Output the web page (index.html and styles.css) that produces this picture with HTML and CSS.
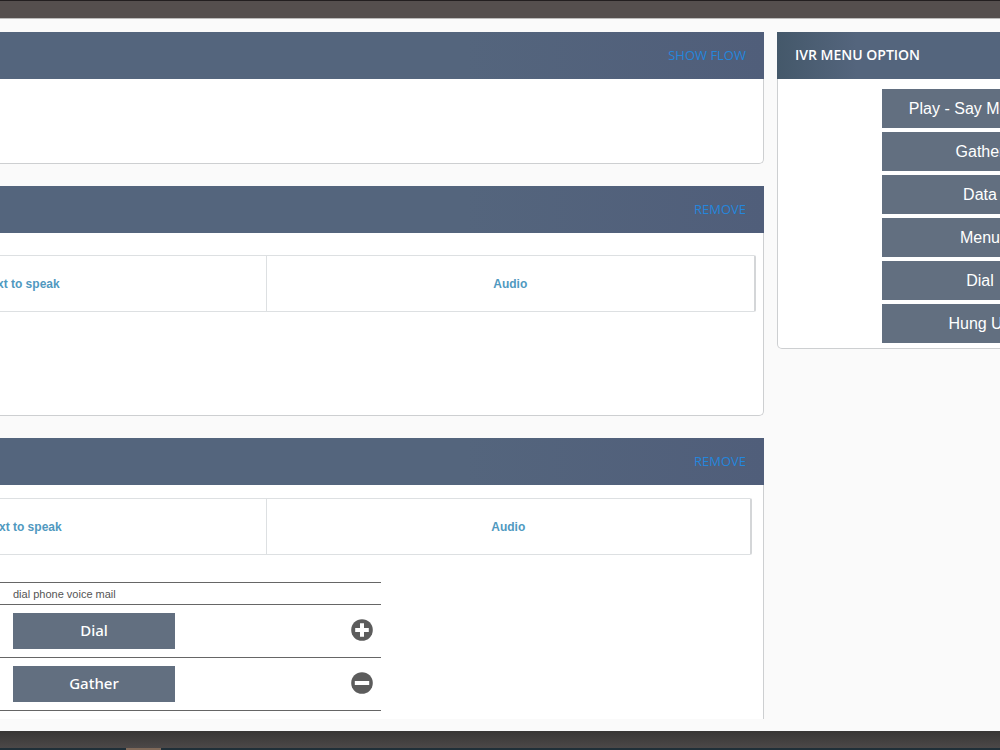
FILE: index.html
```html
<!doctype html>
<html lang="en">
<head>
    <meta charset="UTF-8">
    <meta name="viewport" content="width=device-width, initial-scale=1.0">
    <title>IVR Flow</title>
    <link rel="stylesheet" href="styles.css">
</head>
<body>
<header class="topbar"></header>
<main class="workspace">
    <div class="layout">
        <div class="flow">
            <section class="panel">
                <div class="panel-head">
                    <a href="#flow">SHOW FLOW</a>
                </div>
                <div class="panel-body start"></div>
            </section>
            <section class="panel">
                <div class="panel-head">
                    <a href="#remove-say">REMOVE</a>
                </div>
                <div class="panel-body say">
                    <nav class="tabs">
                        <a href="#say-text">Text to speak</a>
                        <a href="#say-audio">Audio</a>
                    </nav>
                </div>
            </section>
            <section class="panel">
                <div class="panel-head">
                    <a href="#remove-menu">REMOVE</a>
                </div>
                <div class="panel-body menu">
                    <nav class="tabs">
                        <a href="#menu-text">Text to speak</a>
                        <a href="#menu-audio">Audio</a>
                    </nav>
                    <table class="actions">
                        <tr>
                            <th colspan="2">dial phone voice mail</th>
                        </tr>
                        <tr>
                            <td><button class="step">Dial</button></td>
                            <td class="toggle">
                                <button class="icon" aria-label="Add">
                                    <svg viewBox="0 0 22 22" width="22" height="22">
                                        <circle cx="11" cy="11" r="10.8" fill="#5c5c5c"/>
                                        <path d="M4.2 11h13.6M11 4.2v13.6" stroke="#fff" stroke-width="4"/>
                                    </svg>
                                </button>
                            </td>
                        </tr>
                        <tr>
                            <td><button class="step">Gather</button></td>
                            <td class="toggle">
                                <button class="icon" aria-label="Delete">
                                    <svg viewBox="0 0 22 22" width="22" height="22">
                                        <circle cx="11" cy="11" r="10.8" fill="#5c5c5c"/>
                                        <path d="M3.8 11h14.4" stroke="#fff" stroke-width="4"/>
                                    </svg>
                                </button>
                            </td>
                        </tr>
                    </table>
                </div>
            </section>
        </div>
        <aside class="panel options">
            <div class="panel-head">
                <h2>IVR MENU OPTION</h2>
            </div>
            <div class="panel-body option-list">
                <button>Play - Say Message</button>
                <button>Gather</button>
                <button>Data</button>
                <button>Menu</button>
                <button>Dial</button>
                <button>Hung Up</button>
            </div>
        </aside>
    </div>
</main>
<footer class="bottombar">
    <span class="marker"></span>
</footer>
</body>
</html>
```
FILE: styles.css
```css
* {
    box-sizing: border-box;
}

body {
    display: flex;
    flex-direction: column;
    height: 100vh;
    margin: 0;
    overflow: hidden;
    background: #fafafa;
    font-family: "Liberation Sans", Arial, sans-serif;
    font-size: 12px;
}

button {
    border: none;
    color: #fff;
    background: #626f80;
    cursor: pointer;
}

.topbar {
    flex: none;
    height: 18px;
    border-top: 1px solid #231f20;
    background: #554f4e;
    box-shadow: 0 1px #bbb;
}

.workspace {
    flex: 1;
    min-height: 0;
    padding-top: 14px;
    overflow: hidden;
}

/* the board is wider than the window on both sides */
.layout {
    display: flex;
    align-items: flex-start;
    gap: 13px;
    margin: 0 -183px 0 -231px;
}

.flow {
    display: flex;
    flex: 1;
    flex-direction: column;
    gap: 22px;
}

.panel {
    border-radius: 0 0 5px 5px;
}

.panel-head {
    display: flex;
    align-items: center;
    justify-content: flex-end;
    height: 47px;
    padding: 0 18px 2px;
    background: linear-gradient(to right, #44586a, #54657d 80px, #54657d 70%, #505e7a);
    font-family: "Open Sans", sans-serif;
}

.panel-head a {
    color: #2486dc;
    font-size: 13px;
    text-decoration: none;
}

.panel-head h2 {
    margin: 0;
    color: #fff;
    font-size: 14px;
    font-weight: 600;
}

.panel-body {
    border: 1px solid #cdcfd1;
    border-top: none;
    border-radius: 0 0 5px 5px;
    background: #fff;
}

.start {
    height: 85px;
}

.say {
    height: 183px;
    padding: 22px 7px;
}

.menu {
    height: 320px;
    padding: 13px 11px;
}

.tabs {
    display: flex;
    height: 57px;
    border: 1px solid #dde0e2;
    border-right: 2px solid #d4d6d8;
    border-radius: 2px;
}

.tabs a {
    display: flex;
    flex: 1;
    align-items: center;
    justify-content: center;
    color: #5099bf;
    font-weight: bold;
    text-decoration: none;
}

.tabs a + a {
    border-left: 1px solid #dde0e2;
}

.actions {
    width: 600px;
    margin-top: 27px;
    border-collapse: collapse;
}

.actions tr {
    border-top: 1px solid #666;
    border-bottom: 1px solid #666;
}

.actions th {
    height: 22px;
    padding: 0 0 0 232px;
    color: #555;
    font-size: 11px;
    font-weight: normal;
    text-align: left;
}

.actions td {
    height: 53px;
    padding: 0 0 0 232px;
}

.actions .toggle {
    padding: 0 8px 0 0;
    text-align: right;
}

.step {
    display: block;
    width: 162px;
    height: 36px;
    padding: 0 0 2px;
    font-family: "Noto Sans", sans-serif;
    font-size: 15px;
    font-weight: 500;
}

.icon {
    padding: 0;
    background: none;
}

.icon svg {
    display: block;
}

.options {
    flex: none;
    width: 406px;
}

.options .panel-head {
    justify-content: flex-start;
}

.option-list {
    display: flex;
    flex-direction: column;
    gap: 4px;
    padding: 10px 104px 5px;
}

.option-list button {
    height: 39px;
    font-family: inherit;
    font-size: 16px;
}

.bottombar {
    flex: none;
    height: 31px;
    padding-left: 126px;
    border-top: 12px solid #fafafa;
    border-bottom: 2px solid #202f38;
    background: linear-gradient(#383635, #4c4848);
}

.marker {
    display: block;
    width: 35px;
    height: 2px;
    margin-top: 17px;
    background: #806959;
}
```
